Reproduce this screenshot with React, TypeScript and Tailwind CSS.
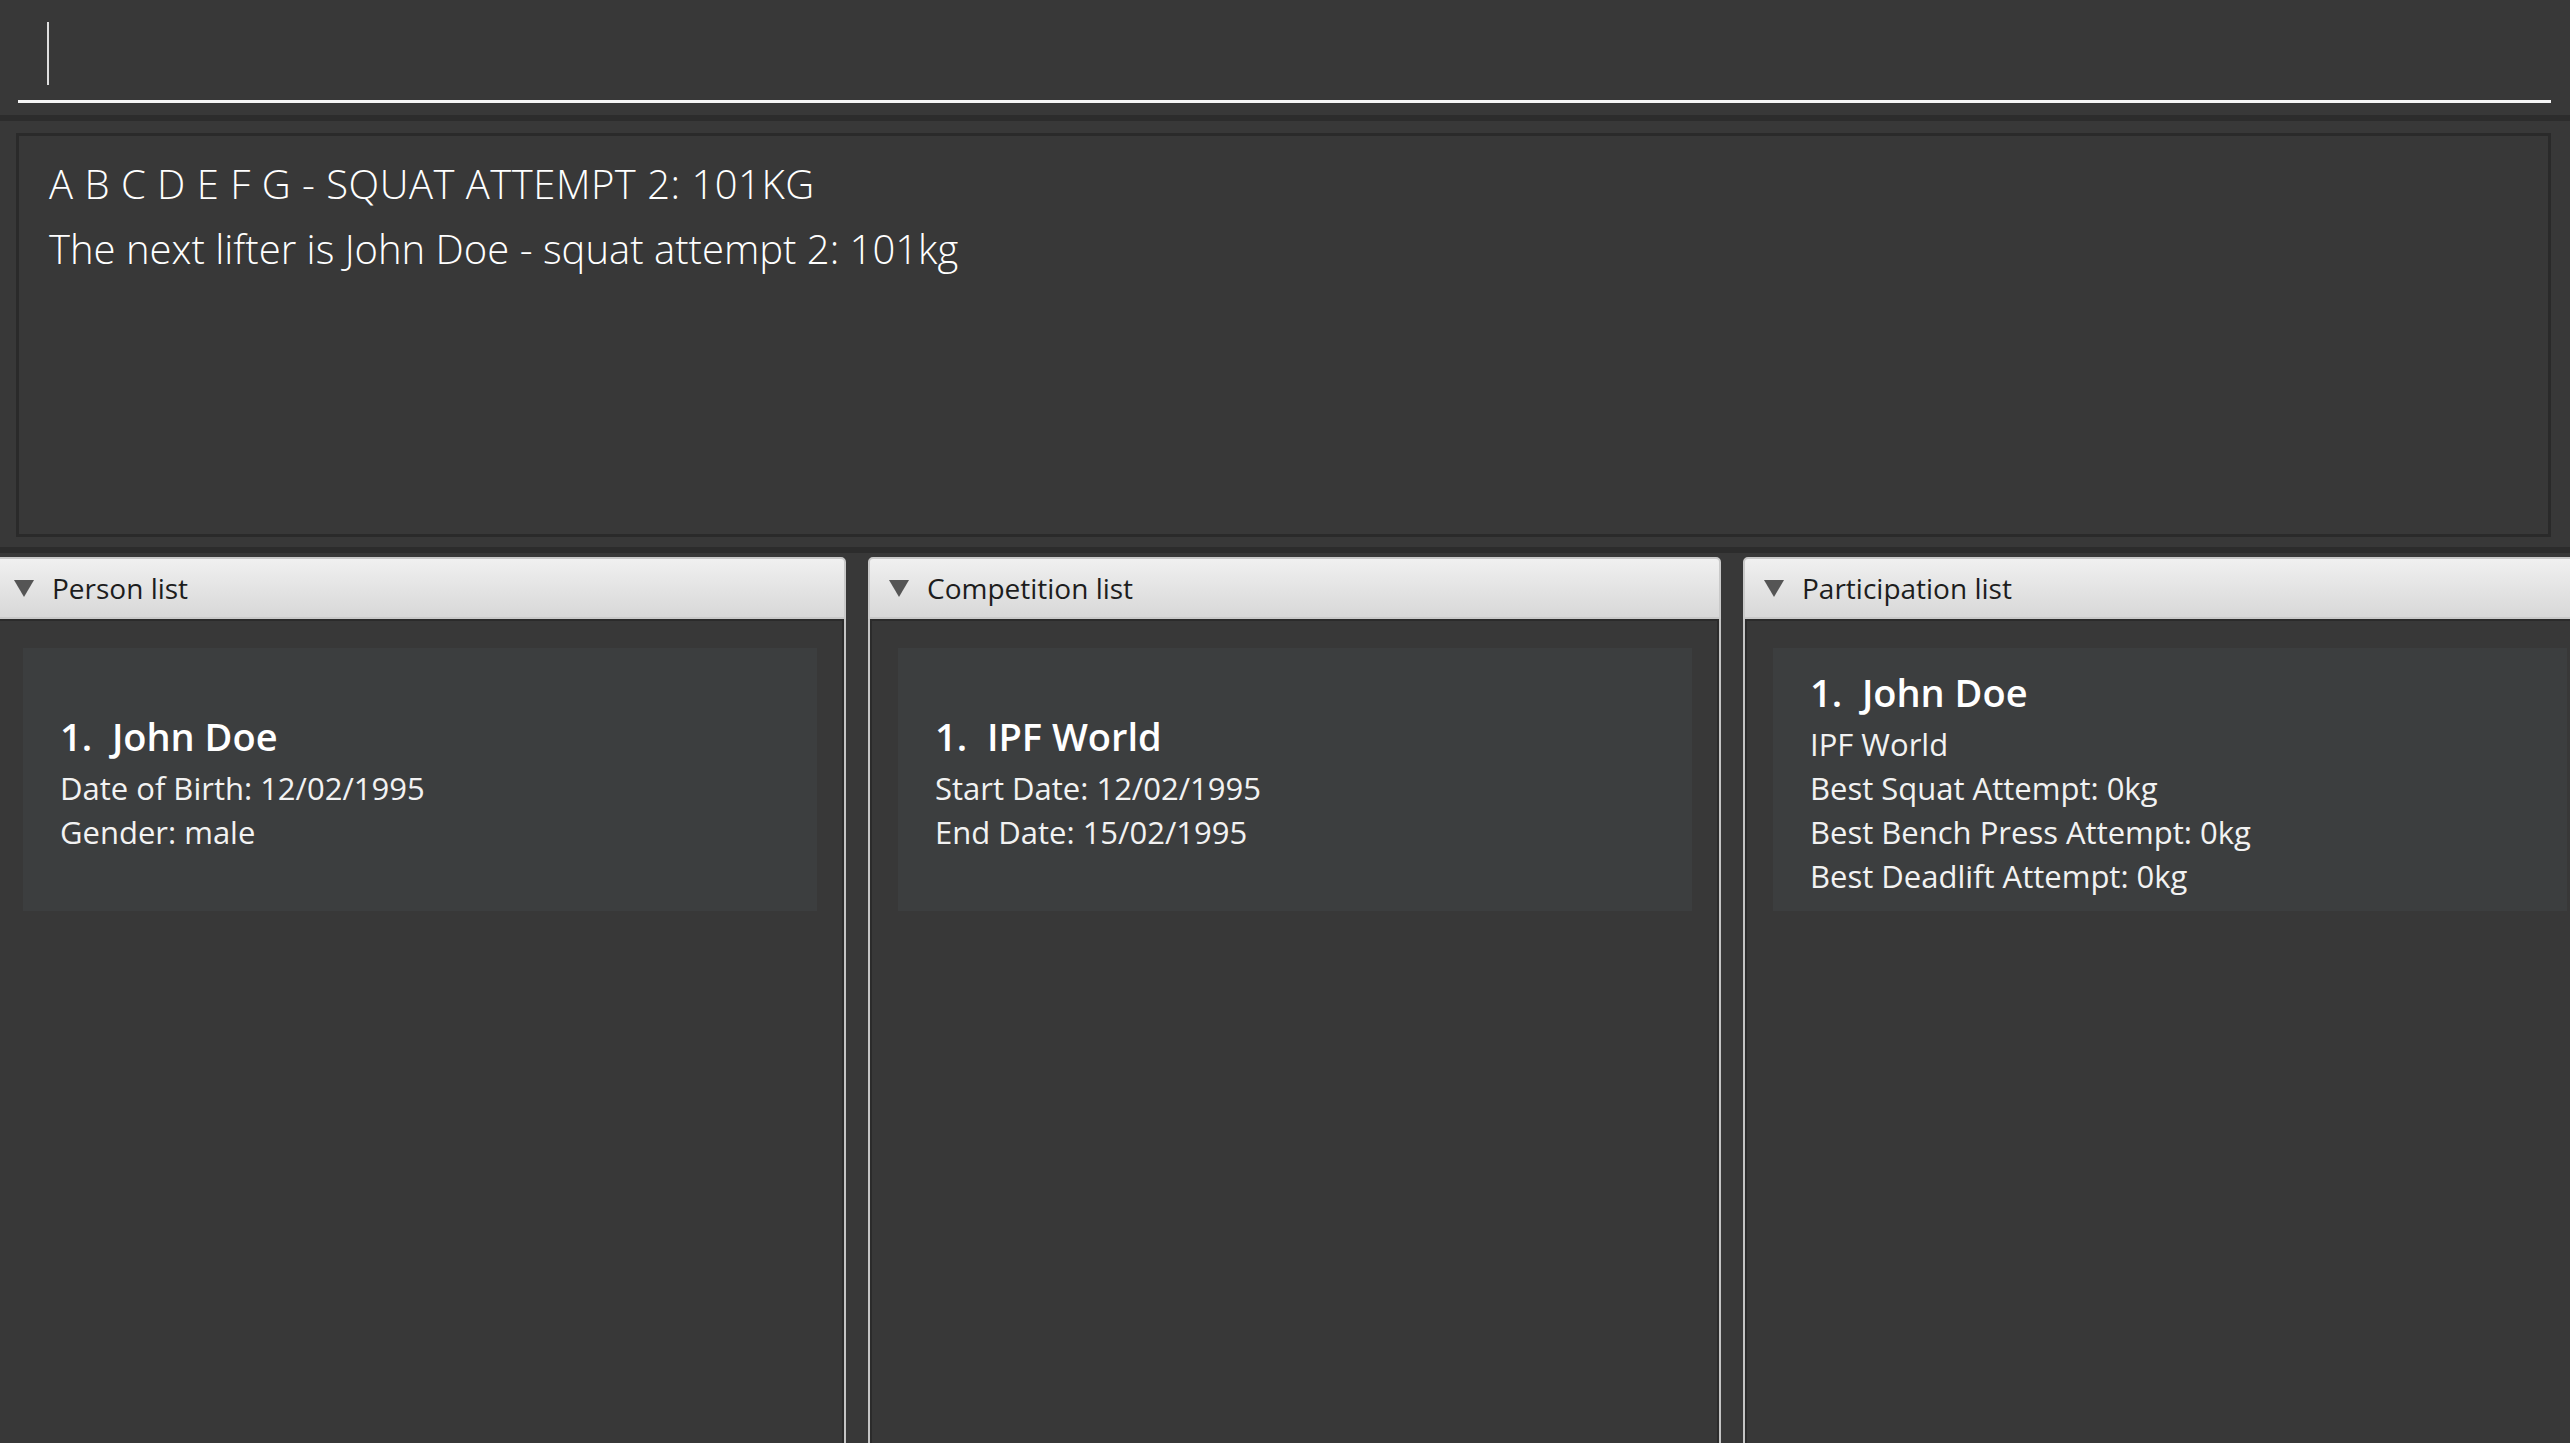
import React from "react";

type Card = {
  title: string;
  lines: string[];
};

const panels: { title: string; card: Card }[] = [
  {
    title: "Person list",
    card: {
      title: "1.  John Doe",
      lines: ["Date of Birth: 12/02/1995", "Gender: male"],
    },
  },
  {
    title: "Competition list",
    card: {
      title: "1.  IPF World",
      lines: ["Start Date: 12/02/1995", "End Date: 15/02/1995"],
    },
  },
  {
    title: "Participation list",
    card: {
      title: "1.  John Doe",
      lines: [
        "IPF World",
        "Best Squat Attempt: 0kg",
        "Best Bench Press Attempt: 0kg",
        "Best Deadlift Attempt: 0kg",
      ],
    },
  },
];

function Panel({ title, card }: { title: string; card: Card }) {
  return (
    <div className="flex w-[853px] shrink-0 flex-col">
      {/* TitledPane header */}
      <div className="flex h-[62px] shrink-0 items-center rounded-t-[5px] border-2 border-[#c9c9c9] bg-linear-to-b from-[#f0f0f0] to-[#d8d8d8] pl-[19px]">
        <svg width="20" height="17" viewBox="0 0 20 17" className="shrink-0">
          <path d="M0 0 H20 L10 17 Z" fill="#555555" />
        </svg>
        <span className="ml-[18px] text-[28px] leading-none text-[#1d1d1d]">{title}</span>
      </div>

      {/* List body */}
      <div className="flex-1 border-x-2 border-[#c4c4c4]">
        <div className="h-full border-x-2 border-t-2 border-[#2b2b2b] pl-[26px] pr-[25px] pt-[27px]">
          <div className="flex h-[263px] flex-col justify-center bg-[#3c3e3f] pl-[37px] text-[#f2f2f2]">
            <div className="whitespace-pre text-[38px] font-semibold leading-[60px] text-white">
              {card.title}
            </div>
            {card.lines.map((line) => (
              <div key={line} className="text-[31px] leading-[44px]">
                {line}
              </div>
            ))}
          </div>
        </div>
      </div>
    </div>
  );
}

export default function App() {
  return (
    <div className="flex h-[1443px] w-[2570px] flex-col overflow-hidden bg-[#383838] font-['Open_Sans',sans-serif]">
      {/* Command box */}
      <div className="h-[115px] shrink-0 pl-[18px] pr-[19px]">
        <div className="h-[103px] border-b-[3px] border-[#f5f5f5] pl-[29px] pt-[22px]">
          <div className="h-[63px] w-[2px] bg-[#dedede]" />
        </div>
      </div>
      <div className="h-[6px] shrink-0 bg-[#2c2c2c]" />

      {/* Result display */}
      <div className="shrink-0 pb-[10px] pl-[16px] pr-[19px] pt-[12px]">
        <div className="h-[404px] border-[3px] border-[#2a2a2a] pl-[30px] pt-[15px] text-[40px] font-light leading-[65px] text-white">
          <div className="tracking-[0.5px]">A B C D E F G - SQUAT ATTEMPT 2: 101KG</div>
          <div>The next lifter is John Doe - squat attempt 2: 101kg</div>
        </div>
      </div>
      <div className="h-[6px] shrink-0 bg-[#2c2c2c]" />

      {/* Lists */}
      <div className="-ml-[7px] flex flex-1 gap-[22px] pt-[4px]">
        {panels.map((p) => (
          <Panel key={p.title} title={p.title} card={p.card} />
        ))}
      </div>
    </div>
  );
}
